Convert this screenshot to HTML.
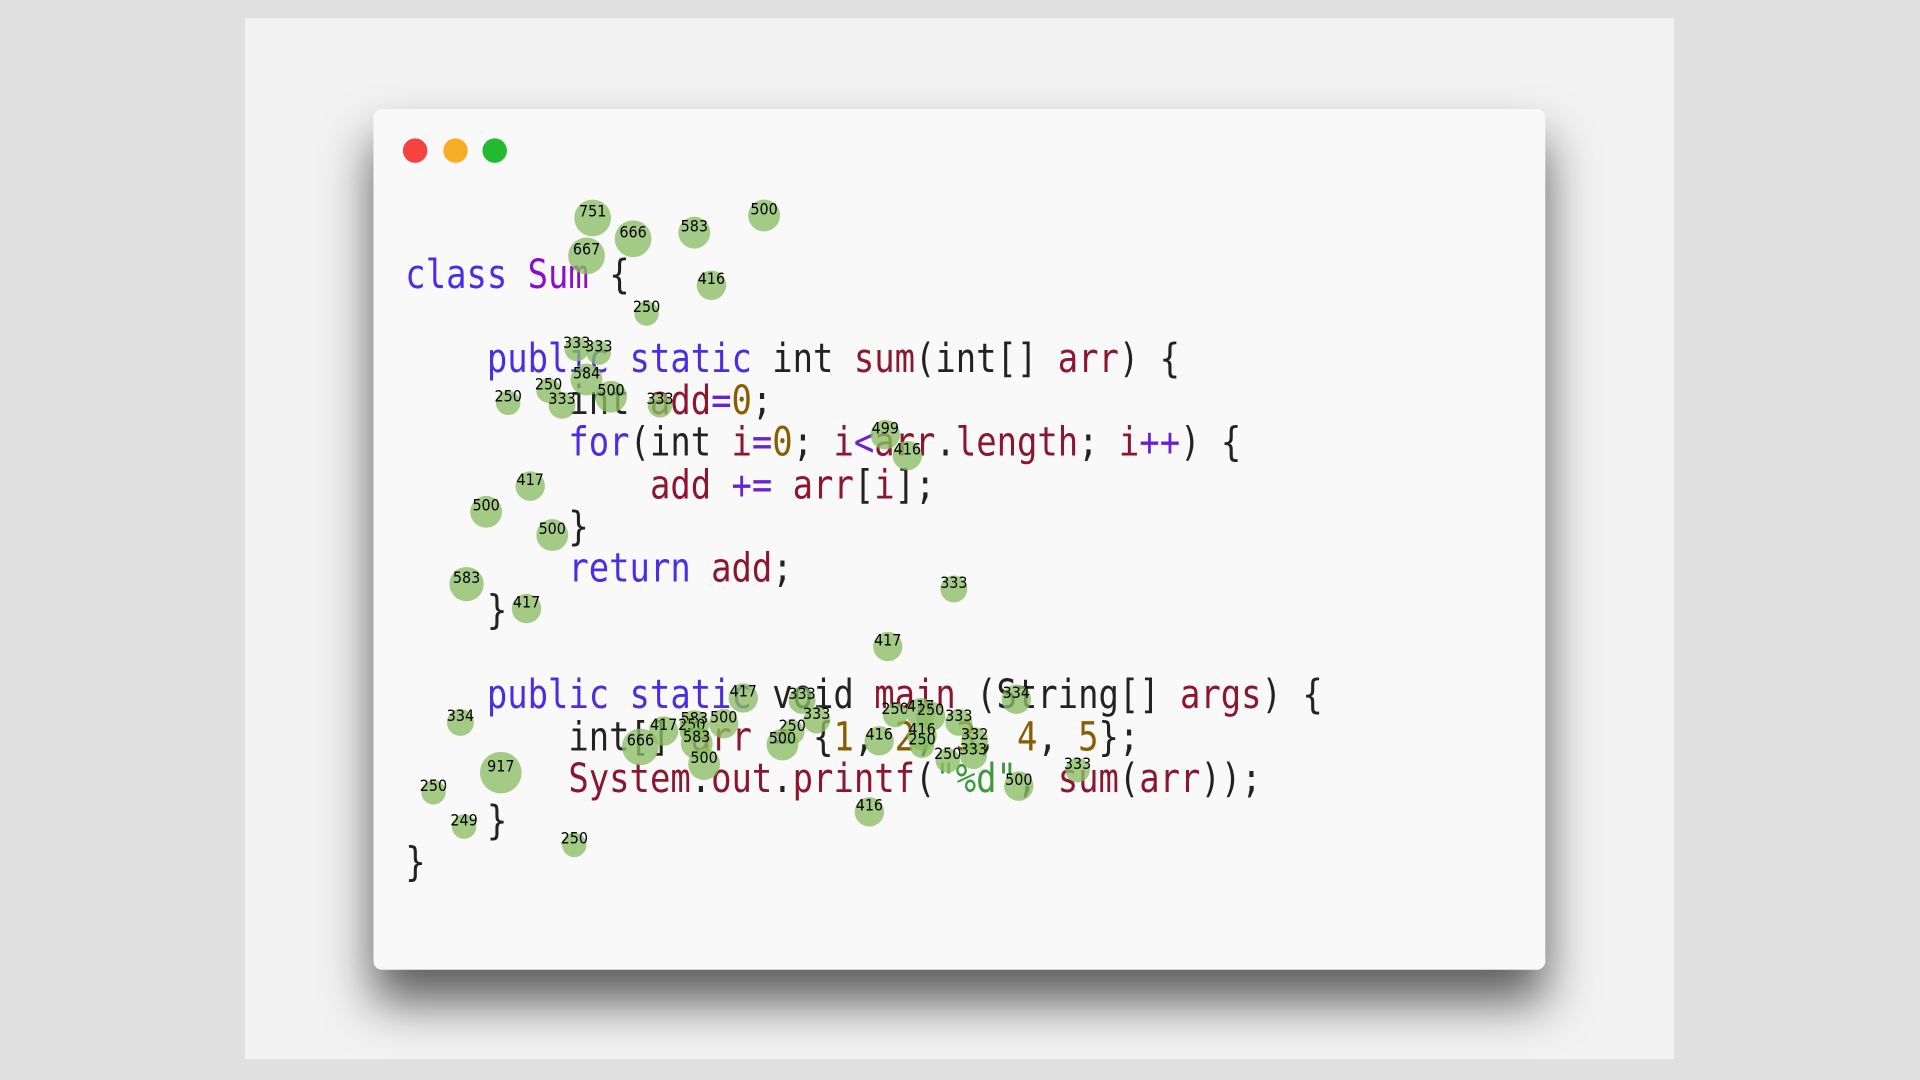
<!DOCTYPE html>
<html><head><meta charset="utf-8"><style>
html,body{margin:0;padding:0;width:1920px;height:1080px;overflow:hidden;background:#e0e0e0}
#s{position:absolute;left:0;top:0;width:1568px;height:882px;transform:scale(1.22449);transform-origin:0 0}
.panel{position:absolute;left:200px;top:15px;width:1167px;height:850px;background:#f2f2f2}
.win{position:absolute;left:305px;top:89px;width:957px;height:703px;background:#f9f9f9;border-radius:7px;box-shadow:0 26px 40px rgba(0,0,0,0.62)}
.dot{position:absolute;top:113px;width:20px;height:20px;border-radius:50%}
.l{position:absolute;left:331px;height:34px;line-height:34px;font-family:"DejaVu Sans Mono","Liberation Mono",monospace;font-size:32.7px;white-space:pre;transform:scaleX(0.846);transform-origin:0 50%;color:#222}
.k{color:#4a2ee6}.c{color:#8a0ccc}.v{color:#8c1530}.n{color:#8a5c00}.o{color:#6a22d0}.st{color:#3c9a3c}
.b{position:absolute;border-radius:50%;background:rgba(140,190,100,0.78);font-family:"DejaVu Sans Condensed","Liberation Sans Narrow","Liberation Sans",sans-serif;font-size:13px;color:#000;text-align:center}
.b span{position:absolute;left:-20px;right:-20px;top:calc(50% - 12px);line-height:15px;text-align:center}
</style></head><body><div id="s">
<div class="panel"></div>
<div class="win"></div>
<div class="dot" style="left:329px;background:#f5443f"></div>
<div class="dot" style="left:362px;background:#f7ad24"></div>
<div class="dot" style="left:394px;background:#22bb2f"></div>

<div class="l" style="top:207px"><span class="k">class</span> <span class="c">Sum</span> {</div>
<div class="l" style="top:276px">    <span class="k">public static</span> int <span class="v">sum</span>(int[] <span class="v">arr</span>) {</div>
<div class="l" style="top:310px">        int <span class="v">add</span><span class="o">=</span><span class="n">0</span>;</div>
<div class="l" style="top:344px">        <span class="k">for</span>(int <span class="v">i</span><span class="o">=</span><span class="n">0</span>; <span class="v">i</span><span class="o">&lt;</span><span class="v">arr</span>.<span class="v">length</span>; <span class="v">i</span><span class="o">++</span>) {</div>
<div class="l" style="top:379px">            <span class="v">add</span> <span class="o">+=</span> <span class="v">arr</span>[<span class="v">i</span>];</div>
<div class="l" style="top:413px">        }</div>
<div class="l" style="top:447px">        <span class="k">return</span> <span class="v">add</span>;</div>
<div class="l" style="top:481px">    }</div>
<div class="l" style="top:550px">    <span class="k">public static</span> void <span class="v">main</span> (String[] <span class="v">args</span>) {</div>
<div class="l" style="top:585px">        int[] <span class="v">arr</span> <span class="o">=</span> {<span class="n">1</span>, <span class="n">2</span>, <span class="n">3</span>, <span class="n">4</span>, <span class="n">5</span>};</div>
<div class="l" style="top:619px">        <span class="v">System</span>.<span class="v">out</span>.<span class="v">printf</span>(<span class="st">"%d"</span>, <span class="v">sum</span>(<span class="v">arr</span>));</div>
<div class="l" style="top:653px">    }</div>
<div class="l" style="top:687px">}</div>

<div class="b" style="left:469px;top:163px;width:30px;height:30px"><span>751</span></div>
<div class="b" style="left:502px;top:180px;width:30px;height:30px"><span>666</span></div>
<div class="b" style="left:554px;top:177px;width:26px;height:26px"><span>583</span></div>
<div class="b" style="left:611px;top:163px;width:26px;height:26px"><span>500</span></div>
<div class="b" style="left:464px;top:194px;width:30px;height:30px"><span>667</span></div>
<div class="b" style="left:569px;top:221px;width:24px;height:24px"><span>416</span></div>
<div class="b" style="left:518px;top:246px;width:20px;height:20px"><span>250</span></div>
<div class="b" style="left:461px;top:275px;width:20px;height:20px"><span>333</span></div>
<div class="b" style="left:479px;top:278px;width:20px;height:20px"><span>333</span></div>
<div class="b" style="left:466px;top:297px;width:26px;height:26px"><span>584</span></div>
<div class="b" style="left:438px;top:309px;width:20px;height:20px"><span>250</span></div>
<div class="b" style="left:486px;top:311px;width:26px;height:26px"><span>500</span></div>
<div class="b" style="left:405px;top:319px;width:20px;height:20px"><span>250</span></div>
<div class="b" style="left:448px;top:320px;width:22px;height:22px"><span>333</span></div>
<div class="b" style="left:529px;top:321px;width:20px;height:20px"><span>333</span></div>
<div class="b" style="left:711px;top:343px;width:24px;height:24px"><span>499</span></div>
<div class="b" style="left:729px;top:360px;width:24px;height:24px"><span>416</span></div>
<div class="b" style="left:421px;top:385px;width:24px;height:24px"><span>417</span></div>
<div class="b" style="left:384px;top:405px;width:26px;height:26px"><span>500</span></div>
<div class="b" style="left:438px;top:424px;width:26px;height:26px"><span>500</span></div>
<div class="b" style="left:367px;top:463px;width:28px;height:28px"><span>583</span></div>
<div class="b" style="left:418px;top:485px;width:24px;height:24px"><span>417</span></div>
<div class="b" style="left:768px;top:470px;width:22px;height:22px"><span>333</span></div>
<div class="b" style="left:713px;top:516px;width:24px;height:24px"><span>417</span></div>
<div class="b" style="left:595px;top:558px;width:24px;height:24px"><span>417</span></div>
<div class="b" style="left:644px;top:561px;width:22px;height:22px"><span>333</span></div>
<div class="b" style="left:818px;top:559px;width:24px;height:24px"><span>334</span></div>
<div class="b" style="left:365px;top:579px;width:22px;height:22px"><span>334</span></div>
<div class="b" style="left:656px;top:577px;width:22px;height:22px"><span>333</span></div>
<div class="b" style="left:555px;top:580px;width:24px;height:24px"><span>583</span></div>
<div class="b" style="left:579px;top:579px;width:24px;height:24px"><span>500</span></div>
<div class="b" style="left:530px;top:585px;width:24px;height:24px"><span>417</span></div>
<div class="b" style="left:555px;top:587px;width:20px;height:20px"><span>250</span></div>
<div class="b" style="left:721px;top:574px;width:20px;height:20px"><span>250</span></div>
<div class="b" style="left:740px;top:570px;width:24px;height:24px"><span>417</span></div>
<div class="b" style="left:748px;top:573px;width:24px;height:24px"><span>250</span></div>
<div class="b" style="left:772px;top:579px;width:22px;height:22px"><span>333</span></div>
<div class="b" style="left:637px;top:588px;width:20px;height:20px"><span>250</span></div>
<div class="b" style="left:508px;top:595px;width:30px;height:30px"><span>666</span></div>
<div class="b" style="left:556px;top:594px;width:26px;height:26px"><span>583</span></div>
<div class="b" style="left:626px;top:595px;width:26px;height:26px"><span>500</span></div>
<div class="b" style="left:706px;top:593px;width:24px;height:24px"><span>416</span></div>
<div class="b" style="left:741px;top:589px;width:24px;height:24px"><span>416</span></div>
<div class="b" style="left:743px;top:599px;width:20px;height:20px"><span>250</span></div>
<div class="b" style="left:785px;top:594px;width:22px;height:22px"><span>332</span></div>
<div class="b" style="left:784px;top:606px;width:22px;height:22px"><span>333</span></div>
<div class="b" style="left:764px;top:611px;width:20px;height:20px"><span>250</span></div>
<div class="b" style="left:562px;top:611px;width:26px;height:26px"><span>500</span></div>
<div class="b" style="left:392px;top:614px;width:34px;height:34px"><span>917</span></div>
<div class="b" style="left:870px;top:619px;width:20px;height:20px"><span>333</span></div>
<div class="b" style="left:820px;top:630px;width:24px;height:24px"><span>500</span></div>
<div class="b" style="left:344px;top:637px;width:20px;height:20px"><span>250</span></div>
<div class="b" style="left:698px;top:651px;width:24px;height:24px"><span>416</span></div>
<div class="b" style="left:369px;top:665px;width:20px;height:20px"><span>249</span></div>
<div class="b" style="left:459px;top:680px;width:20px;height:20px"><span>250</span></div>
</div></body></html>
